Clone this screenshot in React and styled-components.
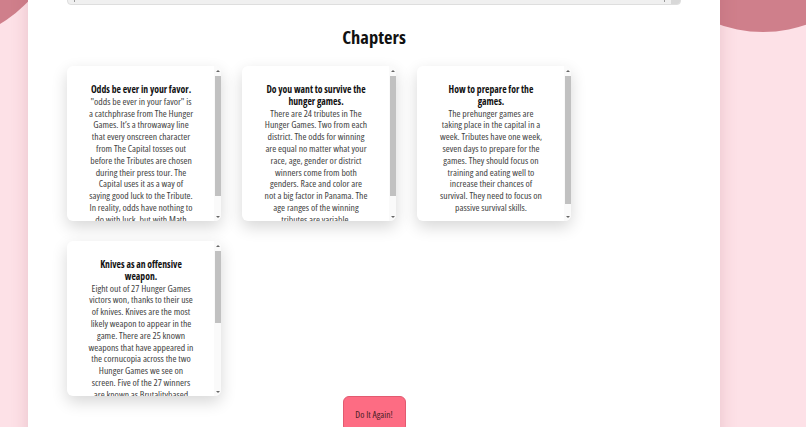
import { Fragment } from 'react'
import styled, { createGlobalStyle } from 'styled-components'

const GlobalStyle = createGlobalStyle`
  html, body {
    margin: 0;
    padding: 0;
    height: 100%;
    overflow: hidden;
    background: #fde1e7;
    font-family: "Open Sans", "Noto Sans", sans-serif;
    font-stretch: 75%;
  }
`

const Page = styled.div`
  position: relative;
  min-height: 427px;
  overflow: hidden;
`

const Blob = styled.div`
  position: absolute;
  border-radius: 50%;
  background: #cf7f8b;
  width: ${p => p.size}px;
  height: ${p => p.size}px;
  left: ${p => p.left}px;
  top: ${p => p.top}px;
`

const Panel = styled.main`
  position: relative;
  width: 692px;
  margin-left: 28px;
  min-height: 427px;
  box-sizing: border-box;
  padding: 0 39px 20px;
  background: #ffffff;
  border-radius: 0 0 12px 12px;
  box-shadow: 0 0 18px rgba(150, 60, 80, 0.18);
`

const Editor = styled.div`
  margin-top: -35px;
  height: 38px;
  display: flex;
  background: #f0f0f0;
  border: 1px solid #dedede;
  border-radius: 4px;
  overflow: hidden;
`

const EditorBody = styled.div`
  flex: 1;
  display: flex;
  align-items: flex-end;
  justify-content: space-between;
  padding: 0 6px 2px;
`

const Tick = styled.span`
  width: 1px;
  height: 3px;
  background: #9a9a9a;
`

const EditorCorner = styled.div`
  width: 9px;
  background: #d8d8d8;
`

const Title = styled.h1`
  margin: 21px 0 18px;
  text-align: center;
  font-size: 18.5px;
  font-stretch: 80%;
  line-height: 22px;
  font-weight: 700;
  color: #111;
`

const Grid = styled.div`
  display: grid;
  grid-template-columns: repeat(3, 154px);
  column-gap: 21px;
  row-gap: 20px;
`

const Card = styled.article`
  height: 155px;
  display: flex;
  background: #fff;
  border-radius: 6px;
  box-shadow: 0 6px 16px rgba(0, 0, 0, 0.16);
  overflow: hidden;
`

const CardBody = styled.div`
  flex: 1;
  min-width: 0;
  overflow: hidden;
  padding: 18px 14px 0 15px;
  text-align: center;
  font-size: 9.7px;
  line-height: 11.8px;
  color: #424242;
`

const CardTitle = styled.h3`
  margin: 0;
  font-size: 9.7px;
  line-height: 11.8px;
  font-weight: 700;
  color: #111;
`

const CardText = styled.p`
  margin: 0;
`

const Rail = styled.div`
  width: 7px;
  display: flex;
  flex-direction: column;
  background: #fafafa;
`

const Arrow = styled.div`
  height: 9px;
  display: flex;
  align-items: center;
  justify-content: center;

  &::before {
    content: '';
    border-left: 2px solid transparent;
    border-right: 2px solid transparent;
    ${p => p.down ? 'border-top: 2px solid #666;' : 'border-bottom: 2px solid #666;'}
  }
`

const Track = styled.div`
  flex: 1;
  padding-top: 1px;
`

const Thumb = styled.div`
  width: 6px;
  margin-left: 1px;
  height: ${p => p.size}px;
  background: #c1c1c1;
`

const Actions = styled.div`
  display: flex;
  justify-content: center;
`

const AgainButton = styled.button`
  width: 63px;
  height: 36px;
  padding: 0;
  border: 1px solid #e25a70;
  border-radius: 6px;
  background: #fd6c83;
  color: #4a1c24;
  font-family: inherit;
  font-stretch: 75%;
  font-size: 9.5px;
  cursor: pointer;
`

const chapters = [
  {
    title: ['Odds be ever in your favor.'],
    thumb: 120,
    lines: [
      '"odds be ever in your favor" is',
      'a catchphrase from The Hunger',
      'Games. It\u2019s a throwaway line',
      'that every onscreen character',
      'from The Capital tosses out',
      'before the Tributes are chosen',
      'during their press tour. The',
      'Capital uses it as a way of',
      'saying good luck to the Tribute.',
      'In reality, odds have nothing to',
      'do with luck, but with Math',
      'and statistics. The more your',
      'name is entered, the higher',
      'your odds of being chosen.',
    ],
  },
  {
    title: ['Do you want to survive the', 'hunger games.'],
    thumb: 120,
    lines: [
      'There are 24 tributes in The',
      'Hunger Games. Two from each',
      'district. The odds for winning',
      'are equal no matter what your',
      'race, age, gender or district',
      'winners come from both',
      'genders. Race and color are',
      'not a big factor in Panama. The',
      'age ranges of the winning',
      'tributes are variable,',
      'from twelve to eighteen.',
    ],
  },
  {
    title: ['How to prepare for the', 'games.'],
    thumb: 128,
    lines: [
      'The prehunger games are',
      'taking place in the capital in a',
      'week. Tributes have one week,',
      'seven days to prepare for the',
      'games. They should focus on',
      'training and eating well to',
      'increase their chances of',
      'survival. They need to focus on',
      'passive survival skills.',
    ],
  },
  {
    title: ['Knives as an offensive', 'weapon.'],
    thumb: 72,
    lines: [
      'Eight out of 27 Hunger Games',
      'victors won, thanks to their use',
      'of knives. Knives are the most',
      'likely weapon to appear in the',
      'game. There are 25 known',
      'weapons that have appeared in',
      'the cornucopia across the two',
      'Hunger Games we see on',
      'screen. Five of the 27 winners',
      'are known as Brutalitybased',
      'victors, who won through',
      'sheer strength and a',
      'willingness to kill.',
    ],
  },
]

const Lines = ({ items }) =>
  items.map((line, i) => (
    <Fragment key={i}>
      {i > 0 && <br />}
      {line}
    </Fragment>
  ))

const App = () => {
  return (
    <Page>
      <GlobalStyle />
      <Blob size={240} left={-180} top={-200} />
      <Blob size={264} left={631} top={-232} />
      <Panel>
        <Editor>
          <EditorBody>
            <Tick />
            <Tick />
          </EditorBody>
          <EditorCorner />
        </Editor>
        <Title>Chapters</Title>
        <Grid>
          {chapters.map(c => (
            <Card key={c.title[0]}>
              <CardBody>
                <CardTitle><Lines items={c.title} /></CardTitle>
                <CardText><Lines items={c.lines} /></CardText>
              </CardBody>
              <Rail>
                <Arrow />
                <Track>
                  <Thumb size={c.thumb} />
                </Track>
                <Arrow down />
              </Rail>
            </Card>
          ))}
        </Grid>
        <Actions>
          <AgainButton>Do It Again!</AgainButton>
        </Actions>
      </Panel>
    </Page>
  )
}

export default App
